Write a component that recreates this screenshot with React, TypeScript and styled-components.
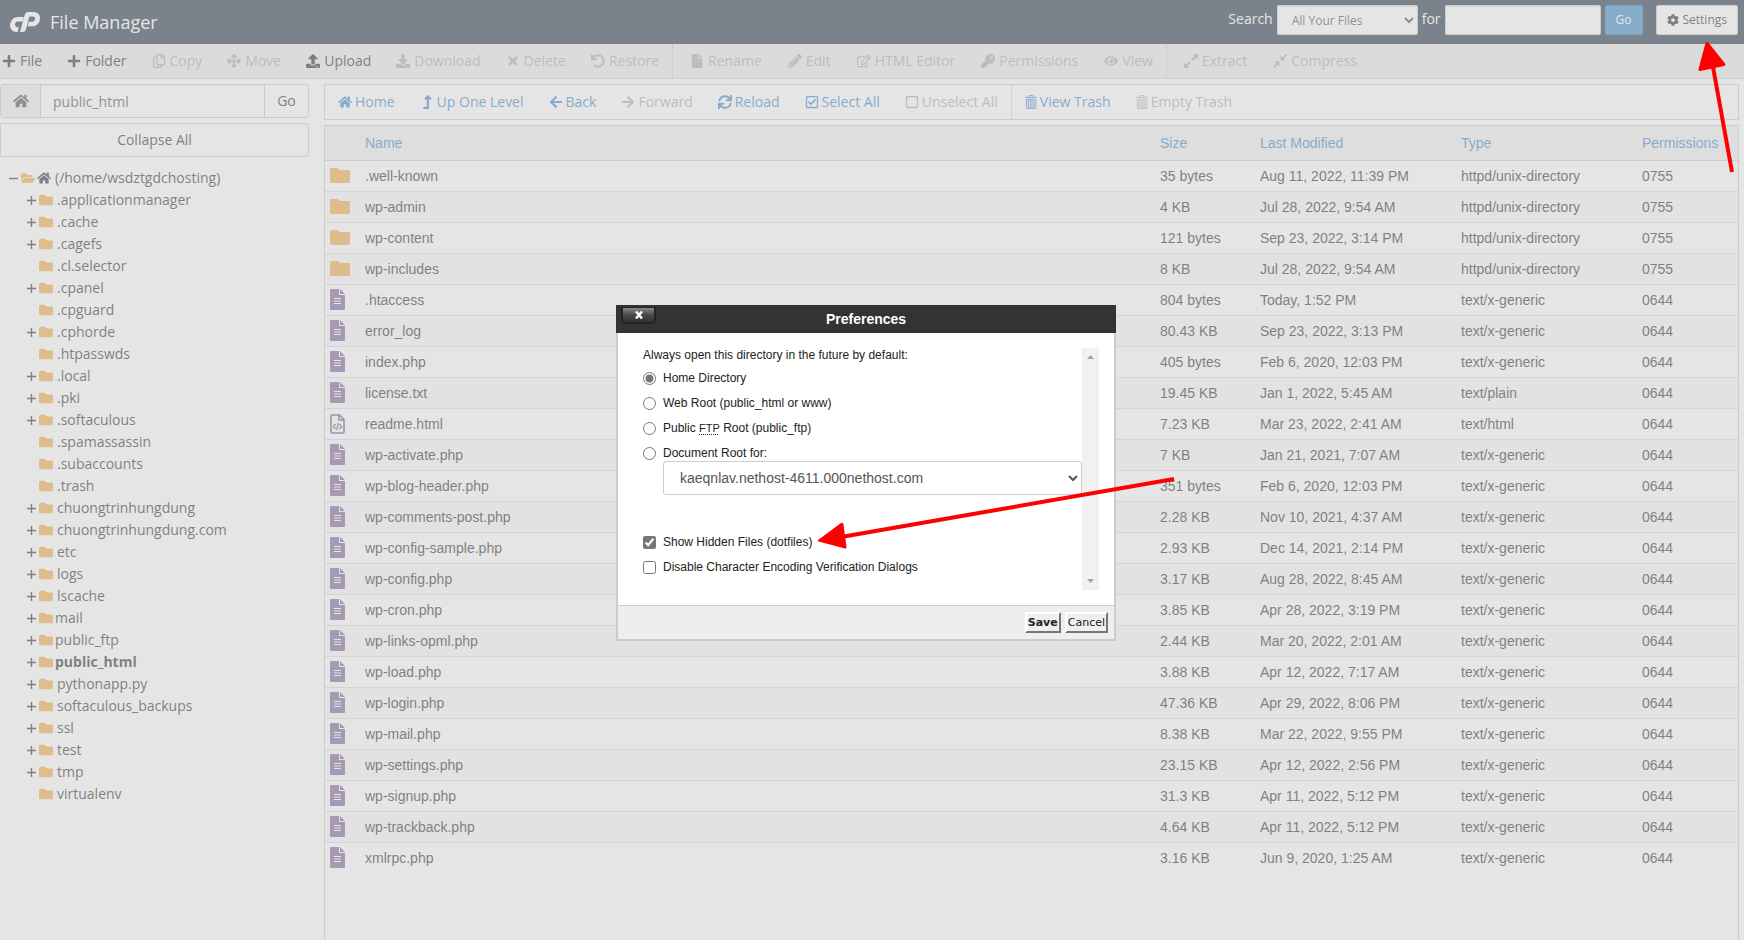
import React from "react";
import styled, { createGlobalStyle, css } from "styled-components";
import {
  FaPlus, FaRegCopy, FaArrowsAlt, FaUpload, FaDownload, FaTimes, FaUndo, FaFile, FaPencilAlt,
  FaRegEdit, FaKey, FaEye, FaHome, FaLevelUpAlt, FaArrowLeft, FaArrowRight, FaSync,
  FaRegCheckSquare, FaRegSquare, FaCog, FaFolder, FaFolderOpen,
} from "react-icons/fa";

const sans = `"Open Sans", "Noto Sans", sans-serif`;
const arial = `"Liberation Sans", Arial, sans-serif`;

const color = {
  text: "#333",
  link: "#428bca",
  disabled: "#aeaeae",
  border: "#ccc",
  folder: "#f0ad4e",
  file: "#80669a",
};

const GlobalStyle = createGlobalStyle`
  *, *::before, *::after { box-sizing: border-box; }
  body { margin: 0; background: #fff; color: ${color.text}; font: 14px/20px ${sans}; }
  button, input, select { font: inherit; color: inherit; margin: 0; }
  button { cursor: pointer; }
`;

const Page = styled.div`
  position: relative;
  display: flex;
  flex-direction: column;
  height: 100vh;
  overflow: hidden;
`;

/* ---------- header ---------- */

const Header = styled.header`
  flex: none;
  display: flex;
  align-items: center;
  justify-content: space-between;
  height: 44px;
  padding: 0 6px 0 10px;
  background: #293a4a;
  color: #fff;
`;

const Brand = styled.div`
  display: flex;
  align-items: center;
  gap: 10px;
`;

const BrandTitle = styled.h1`
  margin: 0;
  font-size: 18px;
  line-height: 24px;
  font-weight: 400;
`;

const SearchForm = styled.form`
  display: flex;
  align-items: center;
  gap: 4px;
  height: 30px;
  margin-bottom: 4px;
`;

const SearchLabel = styled.label`
  line-height: 20px;
  padding-bottom: 2px;
`;

const field = css`
  height: 30px;
  border: 1px solid ${color.border};
  border-radius: 2px;
  background: #fff;
  color: #555;
  box-shadow: inset 0 1px 1px rgba(0, 0, 0, 0.08);
`;

const ScopeSelect = styled.select`
  ${field}
  width: 141px;
  padding: 0 0 0 10px;
  font-size: 12px;
`;

const SearchInput = styled.input`
  ${field}
  width: 156px;
  padding: 0 10px;
`;

const HeaderButton = styled.button<{ $primary?: boolean }>`
  display: flex;
  align-items: center;
  justify-content: center;
  gap: 4px;
  height: 30px;
  padding: 0 10px;
  border: 1px solid ${(p) => (p.$primary ? "#357ebd" : color.border)};
  border-radius: 2px;
  background: ${(p) => (p.$primary ? color.link : "#fff")};
  color: ${(p) => (p.$primary ? "#fff" : color.text)};
  font-size: 12px;
  margin-left: ${(p) => (p.$primary ? "0" : "9px")};
`;

/* ---------- tool bars ---------- */

const Toolbar = styled.nav<{ $boxed?: boolean }>`
  flex: none;
  display: flex;
  height: ${(p) => (p.$boxed ? "36px" : "35px")};
  padding-left: ${(p) => (p.$boxed ? "0" : "2px")};
  border: 1px solid ${color.border};
  border-width: ${(p) => (p.$boxed ? "1px" : "0 0 1px")};
  background: ${(p) => (p.$boxed ? "#fff" : "#eaeaea")};
`;

const ToolGroup = styled.div<{ $flush?: boolean; $boxed?: boolean }>`
  display: flex;
  gap: ${(p) => (p.$flush || p.$boxed ? "25px" : "26px")};
  padding: 0 13px 0 ${(p) => (p.$flush ? "0" : p.$boxed ? "13px" : "17px")};

  & + & {
    border-left: 1px dotted #bbb;
  }

  button {
    gap: ${(p) => (p.$boxed ? "3px" : "4px")};
  }
`;

const Tool = styled.button<{ $link?: boolean }>`
  display: flex;
  align-items: center;
  padding: 0;
  border: 0;
  background: none;
  white-space: nowrap;
  color: ${(p) => (p.$link ? color.link : color.text)};

  &:disabled {
    color: ${color.disabled};
    cursor: default;
  }

  svg {
    width: auto;
    height: 14px;
  }
`;

/* ---------- sidebar ---------- */

const Body = styled.div`
  flex: 1;
  display: flex;
  gap: 15px;
  min-height: 0;
  padding: 5px 5px 0 0;
`;

const Sidebar = styled.aside`
  flex: none;
  width: 309px;
`;

const PathForm = styled.form`
  display: flex;
  height: 34px;
  border: 1px solid ${color.border};
  border-radius: 3px;
  overflow: hidden;
`;

const PathHome = styled.button`
  width: 40px;
  border: 0;
  border-right: 1px solid ${color.border};
  background: #eee;
  color: #555;
  font-size: 16px;
  padding: 4px 0 0;
`;

const PathInput = styled.input`
  flex: 1;
  min-width: 0;
  padding: 2px 12px 0;
  border: 0;
  color: #555;
  box-shadow: inset 0 1px 1px rgba(0, 0, 0, 0.08);
`;

const PathGo = styled.button`
  width: 44px;
  padding: 0;
  border: 0;
  border-left: 1px solid ${color.border};
  background: #fff;
`;

const CollapseButton = styled.button`
  display: block;
  width: 100%;
  height: 34px;
  margin-top: 5px;
  border: 1px solid ${color.border};
  border-radius: 2px;
  background: #fff;
`;

const Tree = styled.ul`
  list-style: none;
  margin: 10px 0 0;
  padding: 0;
`;

const TreeRow = styled.li<{ $root?: boolean; $active?: boolean }>`
  display: flex;
  align-items: center;
  height: 22px;
  padding-left: ${(p) => (p.$root ? "9px" : "27px")};
  font-weight: ${(p) => (p.$active ? 700 : 400)};
  white-space: nowrap;
`;

const Toggle = styled.span`
  display: flex;
  align-items: center;
  width: 12px;
`;

const TreeIcons = styled.span<{ $tight?: boolean }>`
  display: flex;
  align-items: center;
  gap: 2px;
  margin-right: ${(p) => (p.$tight ? "2px" : "4px")};
  color: ${color.text};

  svg {
    width: auto;
    height: 14px;
  }

  svg:first-child {
    color: ${color.folder};
  }
`;

/* ---------- file list ---------- */

const Main = styled.main`
  flex: 1;
  min-width: 0;
  display: flex;
  flex-direction: column;
  gap: 5px;
`;

const ListPanel = styled.div`
  flex: 1;
  border: 1px solid ${color.border};
  border-bottom: 0;
`;

const FileTable = styled.table`
  width: 100%;
  table-layout: fixed;
  border-collapse: collapse;
  font-family: ${arial};
`;

const Row = styled.tr`
  height: 31px;
  border-bottom: 1px solid #ddd;

  &:nth-child(even) {
    background: #f9f9f9;
  }

  &:last-child {
    border-bottom: 0;
  }
`;

const HeadRow = styled.tr`
  height: 34px;
  background: #f0f0f0;
  border-bottom: 1px solid ${color.border};
`;

const Th = styled.th`
  padding: 0;
  text-align: left;
  font-weight: 400;
  color: ${color.link};
`;

const Td = styled.td`
  padding: 0;
  line-height: 20px;
`;

const IconCell = styled.td`
  padding: 0 0 0 5px;

  svg {
    display: block;
  }
`;

const Col = styled.col<{ $w?: number }>`
  width: ${(p) => (p.$w ? `${p.$w}px` : "auto")};
`;

/* ---------- dialog ---------- */

const Mask = styled.div`
  position: absolute;
  inset: 0;
  display: flex;
  align-items: center;
  justify-content: center;
  padding: 5px 12px 0 0;
  background: rgba(204, 204, 204, 0.5);
`;

const Dialog = styled.section`
  position: relative;
  width: 500px;
  font: 12px/15px ${arial};
  color: #222;
`;

const DialogTitle = styled.header`
  display: grid;
  grid-template-columns: 1fr auto 1fr;
  align-items: center;
  height: 28px;
  padding: 0 5px;
  background: #333;

  h2 {
    margin: 0;
    color: #fff;
    font-size: 14px;
    line-height: 20px;
    font-weight: 700;
  }
`;

const CloseButton = styled.button`
  align-self: start;
  display: flex;
  align-items: center;
  justify-content: center;
  width: 35px;
  height: 17px;
  margin-top: 2px;
  padding: 0;
  border: 2px solid #222;
  border-top-width: 1px;
  border-radius: 0 0 5px 5px;
  background: linear-gradient(#8a8a8a, #484848 50%, #333);
  color: #fff;
`;

const DialogBody = styled.div`
  padding: 15px 15px 15px 25px;
  border: 2px solid ${color.border};
  border-width: 0 2px;
  background: #fff;
`;

const ScrollArea = styled.div`
  display: flex;
  height: 242px;
`;

const ScrollTrack = styled.div`
  display: flex;
  flex-direction: column;
  justify-content: space-between;
  align-items: center;
  width: 17px;
  padding: 7px 0;
  background: #f1f1f1;
`;

const Options = styled.div`
  flex: 1;
`;

const Lead = styled.p`
  margin: 0 0 3px;
`;

const Choice = styled.label`
  display: flex;
  align-items: center;
  gap: 7px;
  height: 25px;
  line-height: 20px;

  input {
    width: 13px;
    height: 13px;
    accent-color: #767676;
  }

  abbr {
    font-size: 11px;
    text-decoration: underline dotted;
    text-underline-offset: 2px;
  }
`;

const RootSelect = styled.select`
  display: block;
  width: calc(100% - 20px);
  height: 34px;
  margin: -5px 0 35px 20px;
  padding: 0 0 0 12px;
  border: 1px solid ${color.border};
  border-radius: 3px;
  background: #fff;
  color: #555;
  font-size: 14px;
`;

const DialogFooter = styled.footer`
  display: flex;
  justify-content: flex-end;
  gap: 4px;
  height: 36px;
  padding: 6px 6px 0 0;
  border: 2px solid ${color.border};
  border-top-width: 1px;
  background: #eee;
`;

const DialogButton = styled.button<{ $default?: boolean }>`
  height: 21px;
  padding: 0 1px;
  border: 2px solid #fff;
  border-color: #fff #767676 #767676 #fff;
  background: #efefef;
  color: #222;
  font: ${(p) => (p.$default ? 700 : 400)} 11px/15px "DejaVu Sans", Verdana, sans-serif;
`;

const HeaderArrow = styled.svg`
  position: absolute;
  top: 40px;
  right: 8px;
`;

const OptionArrow = styled.svg`
  position: absolute;
  top: 170px;
  left: 198px;
  pointer-events: none;
`;

/* ---------- drawings ---------- */

const CpLogo = () => (
  <svg width="30" height="20" viewBox="0 0 30 20" fill="#fff" aria-hidden="true">
    <path d="M13.800 5L12.700 9.400H7.500C4.600 9.400 3.900 15.200 7.400 15.200H8.800L7.600 20H6.400C2 20 -0.700 16.200 0.200 12C1.100 7.800 4 5 7.800 5Z" />
    <path d="M10 20L14.800 2.600Q15.600 0 18.200 0H23.600C28.400 0 31 4 29.700 8.400C28.700 12 25.800 14.300 22.200 14.300H17.600L18.800 9.800H22C25.500 9.800 26.200 4.600 22.800 4.600H19.400L15.800 17.800Q15.200 20 13 20Z" />
  </svg>
);

const TrashIcon = () => (
  <svg width="13" height="15" viewBox="0 0 13 15" fill="none" stroke="currentColor" aria-hidden="true">
    <path d="M0 2.500H13M4.500 2V0.500H8.500V2M1.500 4.500H11.500V14.500H1.500ZM3.500 5V14M5.500 5V14M7.500 5V14M9.500 5V14" />
  </svg>
);

const DiagonalIcon = ({ inward }: { inward?: boolean }) => (
  <svg width="14" height="14" viewBox="0 0 14 14" fill="currentColor" stroke="currentColor" strokeWidth="2" aria-hidden="true">
    {inward ? (
      <>
        <path d="M9 5L13.500 0.500M5 9L0.500 13.500" />
        <path d="M7.500 6.500V1.500L12.500 6.500ZM6.500 7.500V12.500L1.500 7.500Z" stroke="none" />
      </>
    ) : (
      <>
        <path d="M8 6L12 2M6 8L2 12" />
        <path d="M14 0V5.500L8.500 0ZM0 14V8.500L5.500 14Z" stroke="none" />
      </>
    )}
  </svg>
);

const ToggleIcon = ({ open }: { open?: boolean }) => (
  <svg width="9" height="9" viewBox="0 0 9 9" stroke={color.text} strokeWidth="1.400" aria-hidden="true">
    <path d={open ? "M0 4.500H9" : "M0 4.500H9M4.500 0V9"} />
  </svg>
);

const FolderRowIcon = () => (
  <svg width="20" height="15" viewBox="0 0 20 15" fill={color.folder} aria-hidden="true">
    <path d="M1.500 0H7.500L10 2H18.500A1.500 1.500 0 0 1 20 3.500V13.500A1.500 1.500 0 0 1 18.500 15H1.500A1.500 1.500 0 0 1 0 13.500V1.500A1.500 1.500 0 0 1 1.500 0Z" />
  </svg>
);

const FileRowIcon = () => (
  <svg width="15" height="21" viewBox="0 0 15 21" aria-hidden="true">
    <path d="M1 0H9V6H15V20A1 1 0 0 1 14 21H1A1 1 0 0 1 0 20V1A1 1 0 0 1 1 0ZM10 0L15 5H10Z" fill={color.file} />
    <path d="M4 9.500H11M4 12H11M4 14.500H11" stroke="#fff" />
  </svg>
);

const HtmlRowIcon = () => (
  <svg width="15" height="20" viewBox="0 0 15 20" fill="none" stroke="#586884" aria-hidden="true">
    <path d="M2 1H9.500L14 5.500V18A1 1 0 0 1 13 19H2A1 1 0 0 1 1 18V2A1 1 0 0 1 2 1ZM9 1V6H14" strokeWidth="1.600" />
    <path d="M5.500 10L3.300 12.500L5.500 15M9.500 10L11.700 12.500L9.500 15M8.300 9L6.700 16" strokeWidth="1.200" />
  </svg>
);

/* ---------- data ---------- */

type Action = { label: string; icon: React.ReactNode; on?: boolean };

const actions: Action[][] = [
  [
    { label: "File", icon: <FaPlus />, on: true },
    { label: "Folder", icon: <FaPlus />, on: true },
    { label: "Copy", icon: <FaRegCopy /> },
    { label: "Move", icon: <FaArrowsAlt /> },
    { label: "Upload", icon: <FaUpload />, on: true },
    { label: "Download", icon: <FaDownload /> },
    { label: "Delete", icon: <FaTimes /> },
    { label: "Restore", icon: <FaUndo /> },
  ],
  [
    { label: "Rename", icon: <FaFile /> },
    { label: "Edit", icon: <FaPencilAlt /> },
    { label: "HTML Editor", icon: <FaRegEdit /> },
    { label: "Permissions", icon: <FaKey /> },
    { label: "View", icon: <FaEye /> },
  ],
  [
    { label: "Extract", icon: <DiagonalIcon /> },
    { label: "Compress", icon: <DiagonalIcon inward /> },
  ],
];

const navigation: Action[][] = [
  [
    { label: "Home", icon: <FaHome />, on: true },
    { label: "Up One Level", icon: <FaLevelUpAlt />, on: true },
    { label: "Back", icon: <FaArrowLeft />, on: true },
    { label: "Forward", icon: <FaArrowRight /> },
    { label: "Reload", icon: <FaSync />, on: true },
    { label: "Select All", icon: <FaRegCheckSquare />, on: true },
    { label: "Unselect All", icon: <FaRegSquare /> },
  ],
  [
    { label: "View Trash", icon: <TrashIcon />, on: true },
    { label: "Empty Trash", icon: <TrashIcon /> },
  ],
];

/* name, has children */
const folders: [string, boolean][] = [
  [".applicationmanager", true], [".cache", true], [".cagefs", true], [".cl.selector", false],
  [".cpanel", true], [".cpguard", false], [".cphorde", true], [".htpasswds", false],
  [".local", true], [".pki", true], [".softaculous", true], [".spamassassin", false],
  [".subaccounts", false], [".trash", false], ["chuongtrinhungdung", true],
  ["chuongtrinhungdung.com", true], ["etc", true], ["logs", true], ["lscache", true],
  ["mail", true], ["public_ftp", true], ["public_html", true], ["pythonapp.py", true],
  ["softaculous_backups", true], ["ssl", true], ["test", true], ["tmp", true], ["virtualenv", false],
];
const specialFolders = ["mail", "public_ftp", "public_html"];

const DIR = "httpd/unix-directory";
const GENERIC = "text/x-generic";

const files: [string, string, string, string][] = [
  [".well-known", "35 bytes", "Aug 11, 2022, 11:39 PM", DIR],
  ["wp-admin", "4 KB", "Jul 28, 2022, 9:54 AM", DIR],
  ["wp-content", "121 bytes", "Sep 23, 2022, 3:14 PM", DIR],
  ["wp-includes", "8 KB", "Jul 28, 2022, 9:54 AM", DIR],
  [".htaccess", "804 bytes", "Today, 1:52 PM", GENERIC],
  ["error_log", "80.43 KB", "Sep 23, 2022, 3:13 PM", GENERIC],
  ["index.php", "405 bytes", "Feb 6, 2020, 12:03 PM", GENERIC],
  ["license.txt", "19.45 KB", "Jan 1, 2022, 5:45 AM", "text/plain"],
  ["readme.html", "7.23 KB", "Mar 23, 2022, 2:41 AM", "text/html"],
  ["wp-activate.php", "7 KB", "Jan 21, 2021, 7:07 AM", GENERIC],
  ["wp-blog-header.php", "351 bytes", "Feb 6, 2020, 12:03 PM", GENERIC],
  ["wp-comments-post.php", "2.28 KB", "Nov 10, 2021, 4:37 AM", GENERIC],
  ["wp-config-sample.php", "2.93 KB", "Dec 14, 2021, 2:14 PM", GENERIC],
  ["wp-config.php", "3.17 KB", "Aug 28, 2022, 8:45 AM", GENERIC],
  ["wp-cron.php", "3.85 KB", "Apr 28, 2022, 3:19 PM", GENERIC],
  ["wp-links-opml.php", "2.44 KB", "Mar 20, 2022, 2:01 AM", GENERIC],
  ["wp-load.php", "3.88 KB", "Apr 12, 2022, 7:17 AM", GENERIC],
  ["wp-login.php", "47.36 KB", "Apr 29, 2022, 8:06 PM", GENERIC],
  ["wp-mail.php", "8.38 KB", "Mar 22, 2022, 9:55 PM", GENERIC],
  ["wp-settings.php", "23.15 KB", "Apr 12, 2022, 2:56 PM", GENERIC],
  ["wp-signup.php", "31.3 KB", "Apr 11, 2022, 5:12 PM", GENERIC],
  ["wp-trackback.php", "4.64 KB", "Apr 11, 2022, 5:12 PM", GENERIC],
  ["xmlrpc.php", "3.16 KB", "Jun 9, 2020, 1:25 AM", GENERIC],
];

const iconFor = (type: string) => {
  if (type === DIR) return <FolderRowIcon />;
  return type === "text/html" ? <HtmlRowIcon /> : <FileRowIcon />;
};

function ActionBar({ groups, boxed, label }: { groups: Action[][]; boxed?: boolean; label: string }) {
  return (
    <Toolbar $boxed={boxed} aria-label={label}>
      {groups.map((group, i) => (
        <ToolGroup key={i} $flush={!boxed && i === 0} $boxed={boxed}>
          {group.map((a) => (
            <Tool key={a.label} type="button" disabled={!a.on} $link={boxed}>
              {a.icon}
              {a.label}
            </Tool>
          ))}
        </ToolGroup>
      ))}
    </Toolbar>
  );
}

function Preferences() {
  return (
    <Dialog role="dialog" aria-labelledby="prefs-title">
      <DialogTitle>
        <CloseButton type="button" aria-label="Close">
          <svg width="8" height="8" viewBox="0 0 8 8" stroke="currentColor" strokeWidth="2.400">
            <path d="M1 0.500L7 7.500M7 0.500L1 7.500" />
          </svg>
        </CloseButton>
        <h2 id="prefs-title">Preferences</h2>
      </DialogTitle>
      <DialogBody>
        <ScrollArea>
          <Options>
            <Lead>Always open this directory in the future by default:</Lead>
            <Choice><input type="radio" name="dir" defaultChecked />Home Directory</Choice>
            <Choice><input type="radio" name="dir" />Web Root (public_html or www)</Choice>
            <Choice>
              <input type="radio" name="dir" />
              <span>Public <abbr title="File Transfer Protocol">FTP</abbr> Root (public_ftp)</span>
            </Choice>
            <Choice><input type="radio" name="dir" />Document Root for:</Choice>
            <RootSelect aria-label="Document root domain">
              <option>kaeqnlav.nethost-4611.000nethost.com</option>
            </RootSelect>
            <Choice><input type="checkbox" defaultChecked />Show Hidden Files (dotfiles)</Choice>
            <Choice><input type="checkbox" />Disable Character Encoding Verification Dialogs</Choice>
          </Options>
          <ScrollTrack>
            <svg width="7" height="4" viewBox="0 0 7 4" fill="#a3a3a3"><path d="M0 4L3.500 0L7 4Z" /></svg>
            <svg width="7" height="4" viewBox="0 0 7 4" fill="#a3a3a3"><path d="M0 0H7L3.500 4Z" /></svg>
          </ScrollTrack>
        </ScrollArea>
      </DialogBody>
      <DialogFooter>
        <DialogButton type="button" $default>Save</DialogButton>
        <DialogButton type="button">Cancel</DialogButton>
      </DialogFooter>
      <OptionArrow width="364" height="84" viewBox="0 0 364 84" fill="red" aria-hidden="true">
        <path d="M30 61.500L360 4" stroke="red" strokeWidth="4" />
        <path d="M4 65L27 48Q29 47 29.400 49L32.500 72Q32.600 74 31 73.600L4.500 66.500Q3 65.800 4 65Z" />
      </OptionArrow>
    </Dialog>
  );
}

export default function App() {
  return (
    <Page>
      <GlobalStyle />
      <Header>
        <Brand>
          <CpLogo />
          <BrandTitle>File Manager</BrandTitle>
        </Brand>
        <SearchForm>
          <SearchLabel htmlFor="scope">Search</SearchLabel>
          <ScopeSelect id="scope"><option>All Your Files</option></ScopeSelect>
          <SearchLabel htmlFor="query">for</SearchLabel>
          <SearchInput id="query" type="text" />
          <HeaderButton type="submit" $primary>Go</HeaderButton>
          <HeaderButton type="button"><FaCog />Settings</HeaderButton>
        </SearchForm>
      </Header>
      <ActionBar groups={actions} label="File actions" />
      <Body>
        <Sidebar>
          <PathForm>
            <PathHome type="button" aria-label="Home"><FaHome /></PathHome>
            <PathInput type="text" aria-label="Path" defaultValue="public_html" />
            <PathGo type="submit">Go</PathGo>
          </PathForm>
          <CollapseButton type="button">Collapse All</CollapseButton>
          <Tree>
            <TreeRow $root>
              <Toggle><ToggleIcon open /></Toggle>
              <TreeIcons><FaFolderOpen /><FaHome /></TreeIcons>
              <span>(/home/wsdztgdchosting)</span>
            </TreeRow>
            {folders.map(([name, children]) => (
              <TreeRow key={name} $active={name === "public_html"}>
                <Toggle>{children && <ToggleIcon />}</Toggle>
                <TreeIcons $tight={specialFolders.includes(name)}><FaFolder /></TreeIcons>
                <span>{name}</span>
              </TreeRow>
            ))}
          </Tree>
        </Sidebar>
        <Main>
          <ActionBar groups={navigation} boxed label="Navigation" />
          <ListPanel>
            <FileTable>
              <colgroup>
                <Col $w={40} />
                <Col />
                <Col $w={100} />
                <Col $w={201} />
                <Col $w={181} />
                <Col $w={96} />
              </colgroup>
              <thead>
                <HeadRow>
                  <Th aria-label="Icon" />
                  <Th>Name</Th>
                  <Th>Size</Th>
                  <Th>Last Modified</Th>
                  <Th>Type</Th>
                  <Th>Permissions</Th>
                </HeadRow>
              </thead>
              <tbody>
                {files.map(([name, size, modified, type]) => (
                  <Row key={name}>
                    <IconCell>{iconFor(type)}</IconCell>
                    <Td>{name}</Td>
                    <Td>{size}</Td>
                    <Td>{modified}</Td>
                    <Td>{type}</Td>
                    <Td>{type === DIR ? "0755" : "0644"}</Td>
                  </Row>
                ))}
              </tbody>
            </FileTable>
          </ListPanel>
        </Main>
      </Body>
      <Mask>
        <Preferences />
      </Mask>
      <HeaderArrow width="40" height="136" viewBox="0 0 40 136" fill="red" aria-hidden="true">
        <path d="M17 27L36 132" stroke="red" strokeWidth="4" />
        <path d="M9.500 3Q11 0.500 12.800 3L29 23.500Q30 25.500 28 26L4.500 31Q2 31.500 2.500 29Z" />
      </HeaderArrow>
    </Page>
  );
}
